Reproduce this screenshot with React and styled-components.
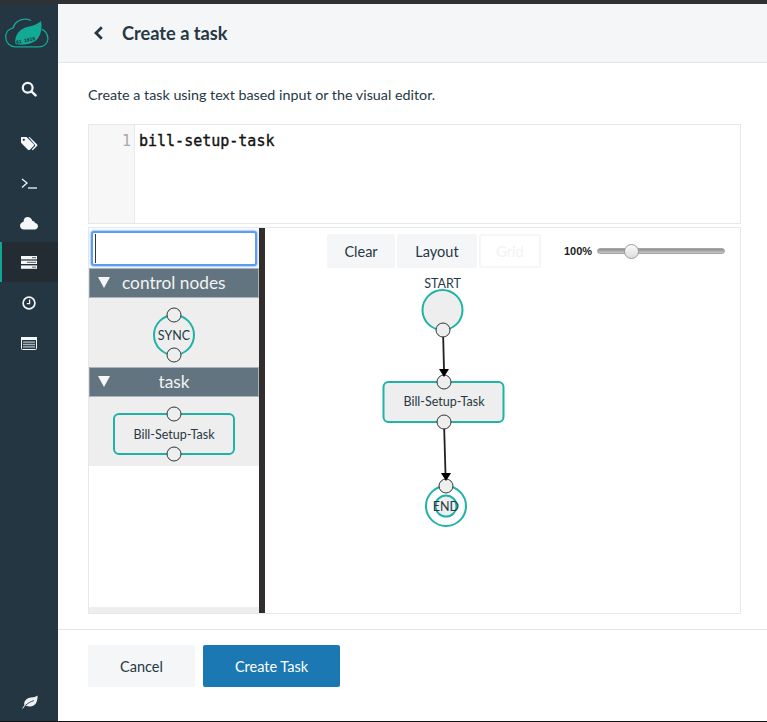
import React from "react";
import styled, { createGlobalStyle } from "styled-components";

const GlobalStyle = createGlobalStyle`
  html, body {
    margin: 0;
    padding: 0;
    background: #fff;
  }
  body {
    font-family: "Lato", "Noto Sans", sans-serif;
    color: #263843;
  }
`;

const Page = styled.div`
  width: 767px;
  height: 722px;
  box-sizing: border-box;
  display: flex;
  border-top: 4px solid #2f3234;
  border-bottom: 1px solid #111;
  overflow: hidden;
`;

const Sidebar = styled.nav`
  width: 58px;
  flex: none;
  background: #243642;
  display: flex;
  flex-direction: column;
`;

const Logo = styled.div`
  height: 64px;
  flex: none;
  box-sizing: border-box;
  padding: 14px 0 0 5px;
`;

const NavItem = styled.div`
  height: 40px;
  flex: none;
  display: flex;
  align-items: center;
  justify-content: center;
  box-sizing: border-box;
  color: #f4f6f8;
  background: ${(p) => (p.$active ? "#222c32" : "transparent")};
  border-left: ${(p) => (p.$active ? "2px solid #10a594" : "none")};
  padding-right: ${(p) => (p.$active ? "2px" : "0")};
  padding-top: ${(p) => (p.$active ? "0" : "2px")};
  margin-top: ${(p) => p.$gap || 0}px;
`;

const NavFoot = styled.div`
  margin-top: auto;
  height: 26px;
  flex: none;
  display: flex;
  align-items: flex-start;
  justify-content: center;
  color: #eef1f3;
`;

const Main = styled.main`
  flex: 1;
  display: flex;
  flex-direction: column;
  min-width: 0;
`;

const Header = styled.header`
  height: 59px;
  flex: none;
  box-sizing: border-box;
  background: #f4f6f8;
  border-bottom: 1px solid #e3e6e9;
  display: flex;
  align-items: center;
  padding-left: 35px;
  gap: 18px;
`;

const Title = styled.h1`
  margin: 0;
  font-size: 18.2px;
  font-weight: 700;
  color: #263843;
`;

const Body = styled.section`
  flex: 1;
  padding: 23px 26px 0 30px;
`;

const Lead = styled.p`
  margin: 0 0 20px;
  font-size: 14.3px;
  line-height: 18px;
  color: #263843;
`;

const Editor = styled.div`
  height: 100px;
  box-sizing: border-box;
  border: 1px solid #e6e8ea;
  display: flex;
  font-family: "DejaVu Sans Mono", monospace;
  font-size: 15px;
  line-height: 18px;
`;

const Gutter = styled.div`
  width: 46px;
  flex: none;
  box-sizing: border-box;
  background: #f7f7f7;
  border-right: 1px solid #e6e8ea;
  color: #aaa;
  text-align: right;
  padding: 7px 3px 0 0;
`;

const Code = styled.div`
  padding: 7px 0 0 4px;
  color: #111;
  -webkit-text-stroke: 0.35px #111;
`;

const Flo = styled.div`
  height: 387px;
  margin-top: 3px;
  box-sizing: border-box;
  border: 1px solid #e6e8ea;
  display: flex;
`;

const Palette = styled.aside`
  width: 170px;
  flex: none;
  display: flex;
  flex-direction: column;
`;

const SearchWrap = styled.div`
  height: 40px;
  flex: none;
  box-sizing: border-box;
  padding: 3px 2px 0;
`;

const Search = styled.div`
  height: 35px;
  box-sizing: border-box;
  border: 2px solid #5d9cf0;
  box-shadow: 0 0 2px 1px #a9cbf7;
  border-radius: 3px;
  padding: 1px 2px;
  background: #fff;
`;

const Caret = styled.div`
  width: 1px;
  height: 100%;
  background: #263843;
`;

const GroupHead = styled.div`
  height: 30px;
  flex: none;
  box-sizing: border-box;
  position: relative;
  background: #62747f;
  border: 1px solid #a9b4bb;
  border-left-color: #8d9aa3;
  color: #f1f3f4;
  font-size: 17.3px;
  line-height: 28px;
  text-align: ${(p) => (p.$center ? "center" : "left")};
  padding-left: ${(p) => (p.$center ? "0" : "32px")};
`;

const Triangle = styled.span`
  position: absolute;
  left: 8px;
  top: 8px;
  width: 0;
  height: 0;
  border-left: 6.5px solid transparent;
  border-right: 6.5px solid transparent;
  border-top: 11px solid #f4f6f8;
`;

const GroupBody = styled.div`
  height: 69px;
  flex: none;
  box-sizing: border-box;
  padding-top: 5px;
  background: #eee;
  display: flex;
  align-items: center;
  justify-content: center;
`;

const PaletteRest = styled.div`
  flex: 1;
  background: #fff;
`;

const PaletteFoot = styled.div`
  height: 6px;
  flex: none;
  background: #eee;
`;

const Divider = styled.div`
  width: 6px;
  flex: none;
  background: #312e2d;
`;

const Canvas = styled.div`
  flex: 1;
  position: relative;
  min-width: 0;
`;

const Toolbar = styled.div`
  position: relative;
  display: flex;
  gap: 2px;
  padding: 6px 0 0 62px;
  align-items: flex-start;
`;

const ToolButton = styled.div`
  height: 34px;
  box-sizing: border-box;
  width: ${(p) => p.$width}px;
  border-radius: 2px;
  background: ${(p) => (p.$disabled ? "#fff" : "#f4f6f8")};
  border: ${(p) => (p.$disabled ? "2px solid #f4f6f8" : "none")};
  color: ${(p) => (p.$disabled ? "#f1f2f3" : "#263843")};
  font-size: 14.5px;
  display: flex;
  align-items: center;
  justify-content: center;
`;

const Zoom = styled.div`
  display: flex;
  align-items: center;
  gap: 5px;
  height: 34px;
  margin-left: 21px;
  font-family: "Liberation Sans", sans-serif;
  font-size: 11px;
  font-weight: 700;
  color: #222;
`;

const Track = styled.div`
  width: 128px;
  height: 6px;
  position: relative;
  border-radius: 3px;
  background: linear-gradient(#8e8e8e, #c6c6c6);
  border: 0.5px solid #a5a5a5;
  box-sizing: border-box;
`;

const Thumb = styled.div`
  position: absolute;
  left: 26px;
  top: -5px;
  width: 15px;
  height: 15px;
  box-sizing: border-box;
  border-radius: 50%;
  border: 1px solid #9b9b9b;
  background: linear-gradient(#fafafa, #dedede);
`;

const DiagramSvg = styled.svg`
  position: absolute;
  left: 0;
  top: 0;
  width: 475px;
  height: 385px;
`;

const Footer = styled.footer`
  height: 92px;
  flex: none;
  box-sizing: border-box;
  margin-top: 15px;
  border-top: 1px solid #e3e6e9;
  padding: 15px 30px 0;
  display: flex;
  gap: 8px;
  align-items: flex-start;
`;

const Button = styled.div`
  height: 42px;
  box-sizing: border-box;
  width: ${(p) => p.$width}px;
  border-radius: 2px;
  background: ${(p) => (p.$primary ? "#1b78b3" : "#f4f6f8")};
  color: ${(p) => (p.$primary ? "#fff" : "#263843")};
  font-size: 14.5px;
  display: flex;
  align-items: center;
  justify-content: center;
`;

const LABEL = { fontFamily: "Lato, sans-serif", fontSize: 12.5, fill: "#263843", textAnchor: "middle" };
const TEAL = "#1eb3a6";

function Port({ x, y, fill = "#eee" }) {
  return <circle cx={x} cy={y} r="7" fill={fill} stroke="#2f3539" strokeWidth="1" />;
}

function PaletteSync() {
  return (
    <svg width="50" height="60" viewBox="0 0 50 60">
      <circle cx="25" cy="30" r="20" fill="#eee" stroke={TEAL} strokeWidth="2" />
      <Port x={25} y={10} />
      <Port x={25} y={50} />
      <text x="25" y="34.5" style={LABEL}>SYNC</text>
    </svg>
  );
}

function PaletteTask() {
  return (
    <svg width="124" height="60" viewBox="0 0 124 60">
      <rect x="2" y="10" width="120" height="40" rx="5" fill="#eee" stroke={TEAL} strokeWidth="2" />
      <Port x={62} y={10} />
      <Port x={62} y={50} />
      <text x="62" y="34.5" style={LABEL}>Bill-Setup-Task</text>
    </svg>
  );
}

function FlowDiagram() {
  return (
    <DiagramSvg viewBox="0 0 475 385">
      <text x="177.5" y="60" style={LABEL}>START</text>
      <circle cx="177.5" cy="82" r="20" fill="#eee" stroke={TEAL} strokeWidth="2" />
      <line x1="178" y1="102" x2="179" y2="142" stroke="#222" strokeWidth="1.8" />
      <rect x="118.5" y="154" width="120" height="40" rx="5" fill="#eee" stroke={TEAL} strokeWidth="2" />
      <Port x={179} y={154} />
      <polygon points="174,141 184,141 179,149" fill="#000" />
      <Port x={178} y={102} />
      <text x="179" y="177.5" style={LABEL}>Bill-Setup-Task</text>
      <line x1="179" y1="194" x2="180.5" y2="246" stroke="#222" strokeWidth="1.8" />
      <circle cx="181" cy="278" r="20" fill="#fff" stroke={TEAL} strokeWidth="2" />
      <circle cx="181" cy="278" r="10.5" fill="#eee" stroke={TEAL} strokeWidth="2" />
      <Port x={179} y={194} />
      <Port x={181} y={258} />
      <polygon points="176,245 186,245 181,253" fill="#000" />
      <text x="181" y="282.5" style={LABEL}>END</text>
    </DiagramSvg>
  );
}

function LogoMark() {
  return (
    <svg width="44" height="30" viewBox="0 0 44 30" style={{ display: "block" }}>
      <path d="M26 2.5 C22 0.8 17 0.8 13 3.2 C10 5 8.6 7.6 7.8 10.2 C3.4 11 0.7 14.6 0.7 19 C0.7 24.6 5 28.9 10.5 28.9 H34 C39.4 28.9 42.9 25 42.9 20.4 C42.9 15.6 39.4 12 36.8 11.4" fill="none" stroke="#12a997" strokeWidth="1.3" />
      <path d="M10.5 26 C9 18 14 11 22 9 C28 8 33 6 36 3 C37.5 10 36 18 31 22.5 C26 26.5 16 27.5 10.5 26 Z" fill="#12a997" />
      <text x="11.5" y="26" fontSize="4.6" fontWeight="700" fontFamily="DejaVu Sans Mono, monospace" fill="#1c2c36" transform="rotate(-12 11.5 26)">01 1010</text>
    </svg>
  );
}

function SearchIcon() {
  return (
    <svg width="16" height="16" viewBox="0 0 16 16">
      <circle cx="6.7" cy="6.7" r="4.9" fill="none" stroke="#f4f6f8" strokeWidth="2.2" />
      <line x1="10.4" y1="10.4" x2="14.6" y2="14.4" stroke="#f4f6f8" strokeWidth="2.4" strokeLinecap="round" />
    </svg>
  );
}

function TagsIcon() {
  return (
    <svg width="18" height="15" viewBox="0 0 18 15">
      <path d="M1 1 H6.6 L13.6 8 C14.2 8.6 14.2 9.4 13.6 10 L9.9 13.7 C9.3 14.3 8.5 14.3 7.9 13.7 L1 6.8 Z" fill="#f4f6f8" />
      <path d="M8.5 1 H9.6 L17 8.2 C17.5 8.8 17.5 9.4 17 10 L12.8 14.2 L11.8 13.4 L15.4 9.4 Z" fill="#f4f6f8" />
      <circle cx="3.8" cy="3.8" r="1.1" fill="#243642" />
    </svg>
  );
}

function TerminalIcon() {
  return (
    <svg width="16" height="11" viewBox="0 0 16 11">
      <path d="M1 1 L6 5 L1 9.5" fill="none" stroke="#f4f6f8" strokeWidth="1.3" />
      <line x1="7" y1="10" x2="16" y2="10" stroke="#f4f6f8" strokeWidth="1.3" />
    </svg>
  );
}

function CloudIcon() {
  return (
    <svg width="18" height="14" viewBox="0 0 18 14">
      <path d="M4 13.5 H14.5 C16.5 13.5 18 12 18 10.2 C18 8.4 16.6 7.2 15 7 C14.8 5.6 13.6 4.8 12.4 5 C11.6 2.6 9.8 1 7.6 1 C5.2 1 3.4 3 3.6 5.8 C1.6 6.2 0 7.8 0 9.8 C0 12 1.8 13.5 4 13.5 Z" fill="#f4f6f8" />
    </svg>
  );
}

function ServerIcon() {
  return (
    <svg width="16" height="13" viewBox="0 0 16 13">
      <rect x="0" y="0" width="16" height="3.4" fill="#f4f6f8" />
      <rect x="0" y="4.6" width="16" height="3.4" fill="#f4f6f8" />
      <rect x="0" y="9.4" width="16" height="3.4" fill="#f4f6f8" />
      <rect x="11" y="1" width="4" height="1.2" fill="#6d7a80" />
      <rect x="6" y="5.8" width="9" height="1.2" fill="#6d7a80" />
      <rect x="11" y="10.6" width="4" height="1.2" fill="#6d7a80" />
    </svg>
  );
}

function ClockIcon() {
  return (
    <svg width="14" height="14" viewBox="0 0 14 14">
      <circle cx="7" cy="7" r="5.9" fill="none" stroke="#f4f6f8" strokeWidth="1.7" />
      <path d="M7.6 3.6 V7.6 H4.8" fill="none" stroke="#f4f6f8" strokeWidth="1.3" />
    </svg>
  );
}

function ListIcon() {
  return (
    <svg width="16" height="13" viewBox="0 0 16 13">
      <rect x="0.5" y="0.5" width="15" height="12" rx="1" fill="none" stroke="#f4f6f8" />
      <rect x="0" y="0" width="16" height="3" fill="#f4f6f8" />
      <rect x="2" y="4.4" width="12" height="1.4" fill="#aab3b8" />
      <rect x="2" y="6.8" width="12" height="1.4" fill="#aab3b8" />
      <rect x="2" y="9.2" width="12" height="1.4" fill="#aab3b8" />
    </svg>
  );
}

function LeafIcon() {
  return (
    <svg width="17" height="14" viewBox="0 0 17 14">
      <path d="M1 13.5 C2 12 2.6 11 3.4 10.2 C2.4 6 6 2.6 10 2.4 C12.6 2.2 15 1.8 16.6 0.4 C16.6 5 15.6 10.2 10.6 11.2 C8 11.8 5.6 11.2 4.4 10.6 C3.4 11.4 2.6 12.6 2 13.6 Z" fill="#eef1f3" />
      <path d="M4.4 10.4 C7 8 10 6.6 12.8 5.6" fill="none" stroke="#243642" strokeWidth="0.9" />
    </svg>
  );
}

export default function App() {
  return (
    <>
      <GlobalStyle />
      <Page>
        <Sidebar>
          <Logo>
            <LogoMark />
          </Logo>
          <NavItem><SearchIcon /></NavItem>
          <NavItem $gap={14}><TagsIcon /></NavItem>
          <NavItem><TerminalIcon /></NavItem>
          <NavItem><CloudIcon /></NavItem>
          <NavItem $active><ServerIcon /></NavItem>
          <NavItem><ClockIcon /></NavItem>
          <NavItem><ListIcon /></NavItem>
          <NavFoot><LeafIcon /></NavFoot>
        </Sidebar>
        <Main>
          <Header>
            <svg width="11" height="14" viewBox="0 0 11 14">
              <path d="M8.8 1.2 L3 7 L8.8 12.8" fill="none" stroke="#263843" strokeWidth="2.8" />
            </svg>
            <Title>Create a task</Title>
          </Header>
          <Body>
            <Lead>Create a task using text based input or the visual editor.</Lead>
            <Editor>
              <Gutter>1</Gutter>
              <Code>bill-setup-task</Code>
            </Editor>
            <Flo>
              <Palette>
                <SearchWrap>
                  <Search><Caret /></Search>
                </SearchWrap>
                <GroupHead><Triangle />control nodes</GroupHead>
                <GroupBody><PaletteSync /></GroupBody>
                <GroupHead $center><Triangle />task</GroupHead>
                <GroupBody><PaletteTask /></GroupBody>
                <PaletteRest />
                <PaletteFoot />
              </Palette>
              <Divider />
              <Canvas>
                <FlowDiagram />
                <Toolbar>
                  <ToolButton $width={68}>Clear</ToolButton>
                  <ToolButton $width={80}>Layout</ToolButton>
                  <ToolButton $width={62} $disabled>Grid</ToolButton>
                  <Zoom>
                    100%
                    <Track><Thumb /></Track>
                  </Zoom>
                </Toolbar>
              </Canvas>
            </Flo>
          </Body>
          <Footer>
            <Button $width={107}>Cancel</Button>
            <Button $width={137} $primary>Create Task</Button>
          </Footer>
        </Main>
      </Page>
    </>
  );
}
